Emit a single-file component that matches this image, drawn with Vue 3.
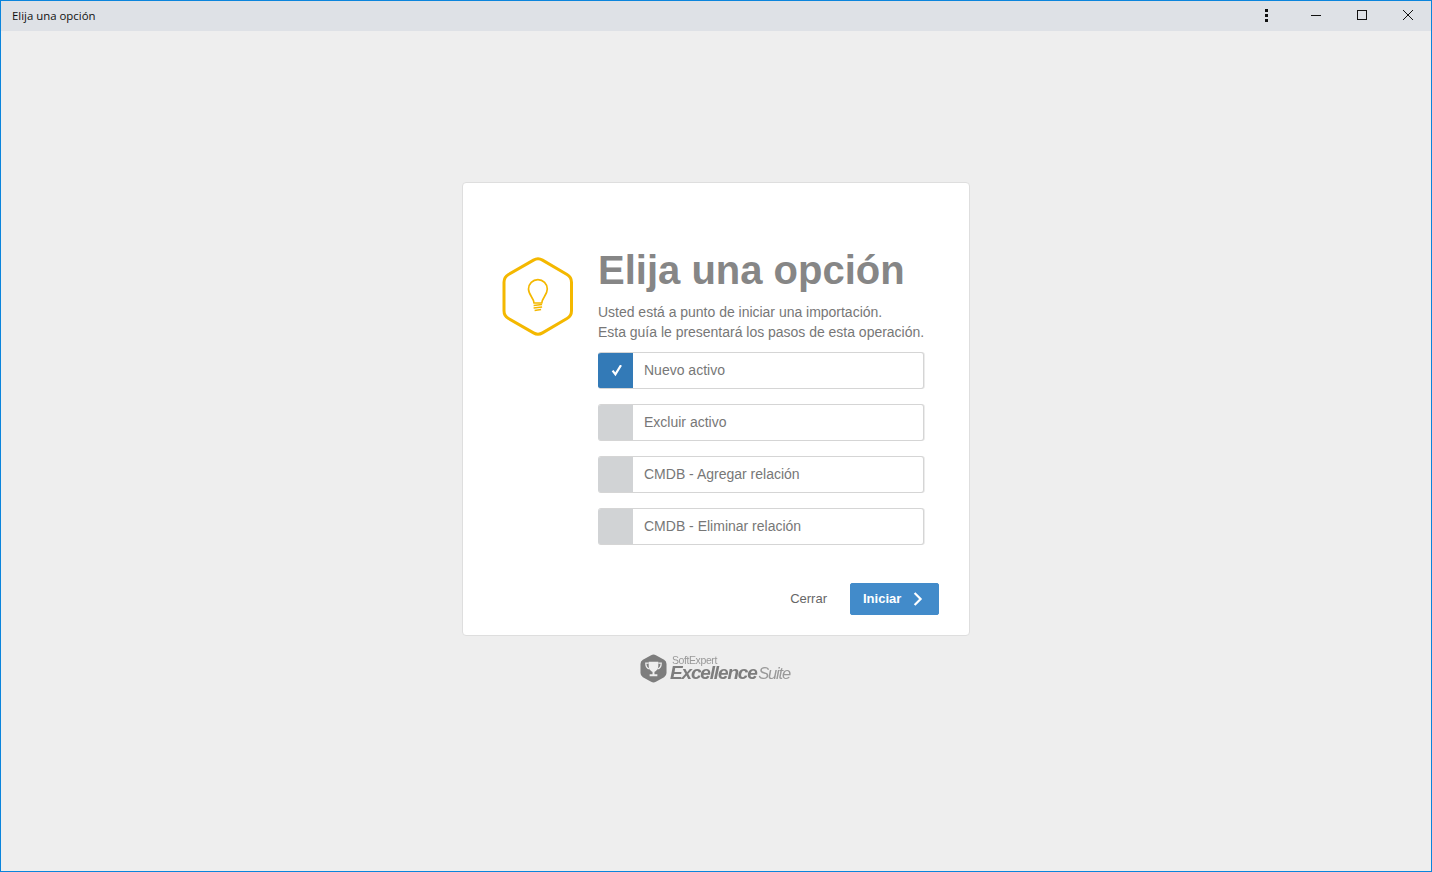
<script setup>
const options = [
  { label: 'Nuevo activo', checked: true },
  { label: 'Excluir activo', checked: false },
  { label: 'CMDB - Agregar relación', checked: false },
  { label: 'CMDB - Eliminar relación', checked: false }
]
</script>

<template>
  <div class="window">
    <header class="titlebar">
      <span class="title">Elija una opción</span>
      <div class="controls">
        <svg class="ctl" width="46" height="30" viewBox="0 0 46 30"><g fill="#111"><rect x="21" y="8" width="3" height="3"/><rect x="21" y="13" width="3" height="3"/><rect x="21" y="18" width="3" height="3"/></g></svg>
        <svg class="ctl" width="46" height="30" viewBox="0 0 46 30"><rect x="18" y="14" width="10" height="1" fill="#111"/></svg>
        <svg class="ctl" width="46" height="30" viewBox="0 0 46 30"><rect x="18.5" y="9.5" width="9" height="9" fill="none" stroke="#111"/></svg>
        <svg class="ctl" width="46" height="30" viewBox="0 0 46 30"><path d="M18 9l10 10M28 9L18 19" stroke="#111" fill="none"/></svg>
      </div>
    </header>
    <main class="stage">
      <section class="card">
        <div class="hex-col">
          <svg width="72" height="80" viewBox="0 0 72 80">
            <path d="M31.5 3.1 a9 9 0 0 1 9 0 L65 17.5 a9 9 0 0 1 4.5 7.8 V53.7 a9 9 0 0 1 -4.5 7.8 L40.5 75.9 a9 9 0 0 1 -9 0 L6.5 61.5 a9 9 0 0 1 -4.5 -7.8 V25.3 a9 9 0 0 1 4.5 -7.8 Z" fill="none" stroke="#f4b800" stroke-width="3"/>
            <path d="M32 46 C32 41 26.5 38 26.5 32 a9.4 9.4 0 0 1 18.8 0 C45.3 38 39.8 41 39.8 46 Z" fill="none" stroke="#f4b800" stroke-width="1.7" stroke-linejoin="round"/>
            <path d="M31.6 48.5 L40.1 47.5 M31.6 51 L40.1 50 M32.6 53.5 L39.1 52.5" stroke="#f4b800" stroke-width="1.4" fill="none"/>
          </svg>
        </div>
        <div class="content">
          <h1>Elija una opción</h1>
          <p class="desc">Usted está a punto de iniciar una importación.<br>Esta guía le presentará los pasos de esta operación.</p>
          <ul class="options">
            <li v-for="o in options" :key="o.label" class="option">
              <span class="box" :class="{ on: o.checked }">
                <svg v-if="o.checked" width="12" height="12" viewBox="0 0 12 12"><path d="M2.6 5.6 L5.4 9.4 L11 0.2" fill="none" stroke="#fff" stroke-width="2.2"/></svg>
              </span>
              <span class="label">{{ o.label }}</span>
            </li>
          </ul>
          <div class="actions">
            <span class="close">Cerrar</span>
            <button class="start"><span class="start-text">Iniciar</span>
              <svg width="10" height="14" viewBox="0 0 10 14"><path d="M1.6 1 L7.6 7 L1.6 13" fill="none" stroke="#fff" stroke-width="2.2"/></svg>
            </button>
          </div>
        </div>
      </section>
      <div class="logo">
        <svg width="27" height="29" viewBox="0 0 28 30">
          <path d="M11.5 1.2 a5 5 0 0 1 5 0 L25 6 a5 5 0 0 1 2.5 4.3 V19.7 a5 5 0 0 1 -2.5 4.3 L16.5 28.8 a5 5 0 0 1 -5 0 L3 24 a5 5 0 0 1 -2.5 -4.3 V10.3 A5 5 0 0 1 3 6 Z" fill="#7d7d7d"/>
          <path d="M9 8 H19 V12 C19 16 16.5 18 15 18.5 V21 H18 V23 H10 V21 H13 V18.5 C11.5 18 9 16 9 12 Z" fill="#eee"/>
          <path d="M9 9.5 H6 C6 13 7.5 15 10 15.5 M19 9.5 H22 C22 13 20.5 15 18 15.5" fill="none" stroke="#eee" stroke-width="1.3"/>
        </svg>
        <div class="logo-text">
          <span class="soft">SoftExpert</span>
          <span class="excel"><b>Excellence</b><i>Suite</i></span>
        </div>
      </div>
    </main>
  </div>
</template>

<style>
html, body { margin: 0; padding: 0; }
</style>

<style scoped>
* { box-sizing: border-box; }
.window {
  width: 1432px;
  height: 872px;
  border: 1px solid #0a84dc;
  background: #eee;
  display: flex;
  flex-direction: column;
  overflow: hidden;
  font-family: "Liberation Sans", Arial, sans-serif;
}
.titlebar {
  height: 30px;
  flex: none;
  background: #dee1e6;
  display: flex;
  align-items: center;
  justify-content: space-between;
  padding-left: 11px;
}
.title {
  font-family: "Open Sans", "Noto Sans", sans-serif;
  font-size: 11.4px;
  line-height: 30px;
  height: 30px;
  color: #111;
}
.controls { display: flex; }
.ctl { display: block; }
.ctl:first-child { transform: translateX(-3px); }
.stage {
  flex: 1;
  display: flex;
  flex-direction: column;
  align-items: center;
  padding-top: 151px;
}
.card {
  width: 508px;
  height: 454px;
  background: #fff;
  border: 1px solid #dedede;
  border-radius: 4px;
  display: flex;
  padding: 74px 30px 0 39px;
}
.hex-col { width: 96px; flex: none; }
.hex-col svg { display: block; }
.content { flex: 1; height: 368px; margin-top: -10px; display: flex; flex-direction: column; }
h1 {
  margin: 0;
  font-size: 40px;
  line-height: 46px;
  font-weight: 700;
  color: #868686;
  white-space: nowrap;
}
.desc {
  margin: 9px 0 0;
  font-size: 14px;
  line-height: 20px;
  letter-spacing: -0.015px;
  color: #777;
  white-space: nowrap;
}
.options {
  list-style: none;
  margin: 10px 0 0;
  padding: 0;
  display: flex;
  flex-direction: column;
  gap: 15px;
  width: 326px;
}
.option {
  height: 37px;
  display: flex;
  border: 1px solid #d5d5d5;
  border-left: 0;
  border-radius: 3px;
  background: #fff;
  overflow: hidden;
  box-shadow: 1px 0 0 #ececec;
}
.box {
  width: 35px;
  flex: none;
  background: #d1d3d5;
  display: flex;
  align-items: center;
  justify-content: center;
}
.box.on { background: #337ab7; }
.label {
  padding-left: 11px;
  font-size: 14px;
  line-height: 35px;
  color: #777;
}
.actions {
  margin-top: auto;
  display: flex;
  align-items: center;
  justify-content: flex-end;
  gap: 23px;
}
.close { font-size: 13px; color: #666; position: relative; top: -1px; }
.start {
  width: 89px;
  height: 32px;
  border: 1px solid #428bca;
  border-radius: 2px;
  background: #428bca;
  color: #fff;
  font: 700 13px "Liberation Sans", Arial, sans-serif;
  display: flex;
  align-items: center;
  padding: 0 0 0 12px;
  gap: 12px;
}
.start-text { position: relative; top: -1px; }
.logo {
  margin-top: 17px;
  margin-right: 2px;
  display: flex;
  align-items: center;
  gap: 3px;
  color: #7d7d7d;
  filter: blur(0.4px);
}
.logo svg { display: block; }
.logo-text { display: flex; flex-direction: column; line-height: 1; padding-top: 1px; }
.soft { font-size: 10.5px; letter-spacing: -0.4px; margin-left: 2px; height: 9px; line-height: 13px; color: #999; }
.excel { font-size: 19px; height: 20px; line-height: 20px; letter-spacing: -1.15px; white-space: nowrap; }
.excel b { font-style: italic; font-weight: 700; }
.excel i { font-weight: 400; font-size: 16.5px; color: #999; margin-left: 1.5px; }
</style>
